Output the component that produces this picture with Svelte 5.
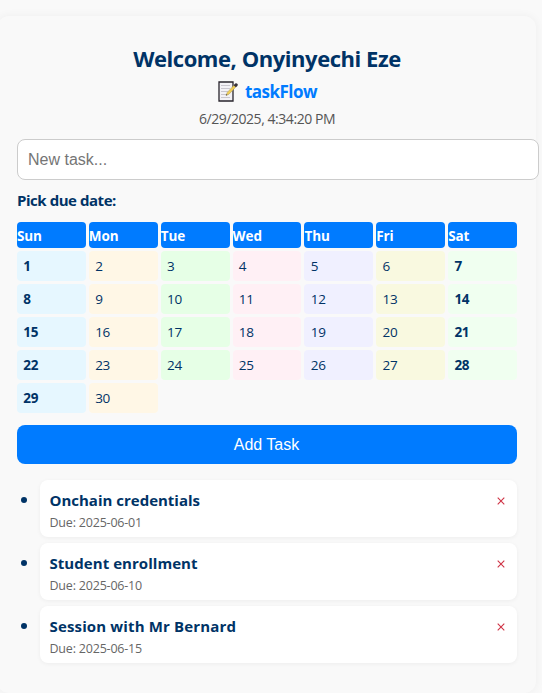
<script>
  const days = ['Sun', 'Mon', 'Tue', 'Wed', 'Thu', 'Fri', 'Sat'];
  const tints = ['#e6f7ff', '#fff7e6', '#e6ffe6', '#fff0f5', '#f0f0ff', '#f9f9e0', '#f0fff0'];
  const dates = Array.from({ length: 30 }, (_, i) => i + 1);
  let tasks = $state([
    { title: 'Onchain credentials', due: '2025-06-01', spacing: 0 },
    { title: 'Student enrollment', due: '2025-06-10', spacing: 0.05 },
    { title: 'Session with Mr Bernard', due: '2025-06-15', spacing: 0.15 }
  ]);
  let text = $state('');
</script>

<main>
  <h2><span>Welcome, Onyinyechi Eze</span></h2>
  <h3>
    <svg width="22" height="22" viewBox="0 0 22 22" aria-hidden="true">
      <path d="M2 2H16V21H2Z" fill="#f3f1f5" stroke="#29252d" stroke-width="1.3" />
      <path d="M4 5.5H13M4 8.5H13M4 11.5H11M4 14.5H9M4 17.5H13" stroke="#c9c6ce" stroke-width="1" />
      <path d="M9 15.5L10.2 12.5L17.2 5L19 6.8L12 14.2Z" fill="#f0ce55" stroke="#a8955c" stroke-width=".5" />
      <path d="M16.6 5.2L18.2 3.4Q19.5 2.8 20.6 4Q21.2 5.2 20.3 6L18.9 7.2Z" fill="#38323b" />
      <path d="M9 15.5L9.5 14L10.4 14.9Z" fill="#39343c" />
    </svg>
    <span>taskFlow</span>
  </h3>
  <p class="clock">6/29/2025, 4:34:20 PM</p>
  <input placeholder="New task..." bind:value={text} />
  <h4>Pick due date:</h4>
  <div class="calendar">
    {#each days as day}
      <div class="day">{day}</div>
    {/each}
    {#each dates as date, i}
      <div class="date" class:weekend={i % 7 === 0 || i % 7 === 6} style:background={tints[i % 7]}>{date}</div>
    {/each}
  </div>
  <button class="add">Add Task</button>
  <ul>
    {#each tasks as task, i}
      <li>
        <div class="card">
          <div>
            <strong style:letter-spacing={`${task.spacing}px`}>{task.title}</strong>
            <small>Due: {task.due}</small>
          </div>
          <button class="remove" aria-label="Remove task" onclick={() => tasks.splice(i, 1)}>
            <svg width="8" height="8" viewBox="0 0 8 8"><path d="M.7.7L7.3 7.3M7.3.7L.7 7.3" stroke="#cf3345" stroke-width="1.1" /></svg>
          </button>
        </div>
      </li>
    {/each}
  </ul>
</main>

<style>
  :global(body) { background: #f9f9f9; overflow: hidden; }
  main {
    box-sizing: border-box;
    width: 539px;
    height: 677px;
    margin: 16px 0 0 -3px;
    padding: 26px 19px 0 20px;
    border-radius: 12px;
    background: #f9f9f9;
    box-shadow: 0 0 10px rgba(0, 0, 0, .05);
    color: #003366;
    font-family: "Open Sans", "Noto Sans", sans-serif;
  }
  h2, h3, h4, p, ul { margin: 0; }
  h2 { height: 33px; line-height: 33px; font-size: 22px; text-align: center; letter-spacing: -.45px; white-space: nowrap; }
  h3 { display: flex; justify-content: center; align-items: center; gap: 6px; height: 32px; color: #007bff; font-size: 17px; letter-spacing: -.5px; }
  .clock { height: 32px; padding-top: 1px; box-sizing: border-box; line-height: 21px; font-size: 14px; letter-spacing: -.45px; color: #555; text-align: center; }
  input {
    display: block;
    box-sizing: border-box;
    width: 522px;
    height: 41px;
    padding: 0 10px;
    border: 1px solid #ccc;
    border-radius: 8px;
    background: #fff;
    font: 16px "Liberation Sans", sans-serif;
  }
  input::placeholder { color: #757575; opacity: 1; }
  h4 { height: 42px; line-height: 40px; font-size: 15px; letter-spacing: -.45px; }
  .calendar { display: grid; grid-template-columns: repeat(7, 1fr); grid-template-rows: 26px; grid-auto-rows: 30px; gap: 3px; }
  .day { border-radius: 4px; background: #007bff; color: #fff; font-size: 13.5px; font-weight: 700; line-height: 29px; letter-spacing: -.1px; }
  .date { padding-left: 6.3px; border-radius: 4px; font-size: 13.5px; line-height: 31px; letter-spacing: -.3px; }
  .weekend { font-weight: 700; }
  .add { display: block; width: 500px; height: 39px; margin: 12px 0 16px; padding: 0 1px 0 0; border: 0; border-radius: 8px; background: #007bff; color: #fff; font: 16px "Liberation Sans", sans-serif; }
  ul { padding: 0; list-style: none; display: flex; flex-direction: column; gap: 6px; }
  li { display: flex; }
  li::before { content: ""; width: 6px; height: 6px; margin: 17px 13px 0 4px; border-radius: 50%; background: #003366; }
  .card { box-sizing: border-box; flex: 1; height: 57px; padding: 9px 12px 0 9.5px; display: flex; justify-content: space-between; border-radius: 8px; background: #fff; box-shadow: 0 1px 4px rgba(0, 0, 0, .05); }
  strong, small { display: block; white-space: nowrap; }
  strong { font-size: 15px; line-height: 22px; }
  small { margin-top: 1px; font-size: 12.5px; line-height: 21px; letter-spacing: -.2px; color: #666; }
  .remove { display: block; width: 8px; height: 8px; margin-top: 8px; padding: 0; border: 0; background: none; }
  .remove svg { display: block; }
</style>
